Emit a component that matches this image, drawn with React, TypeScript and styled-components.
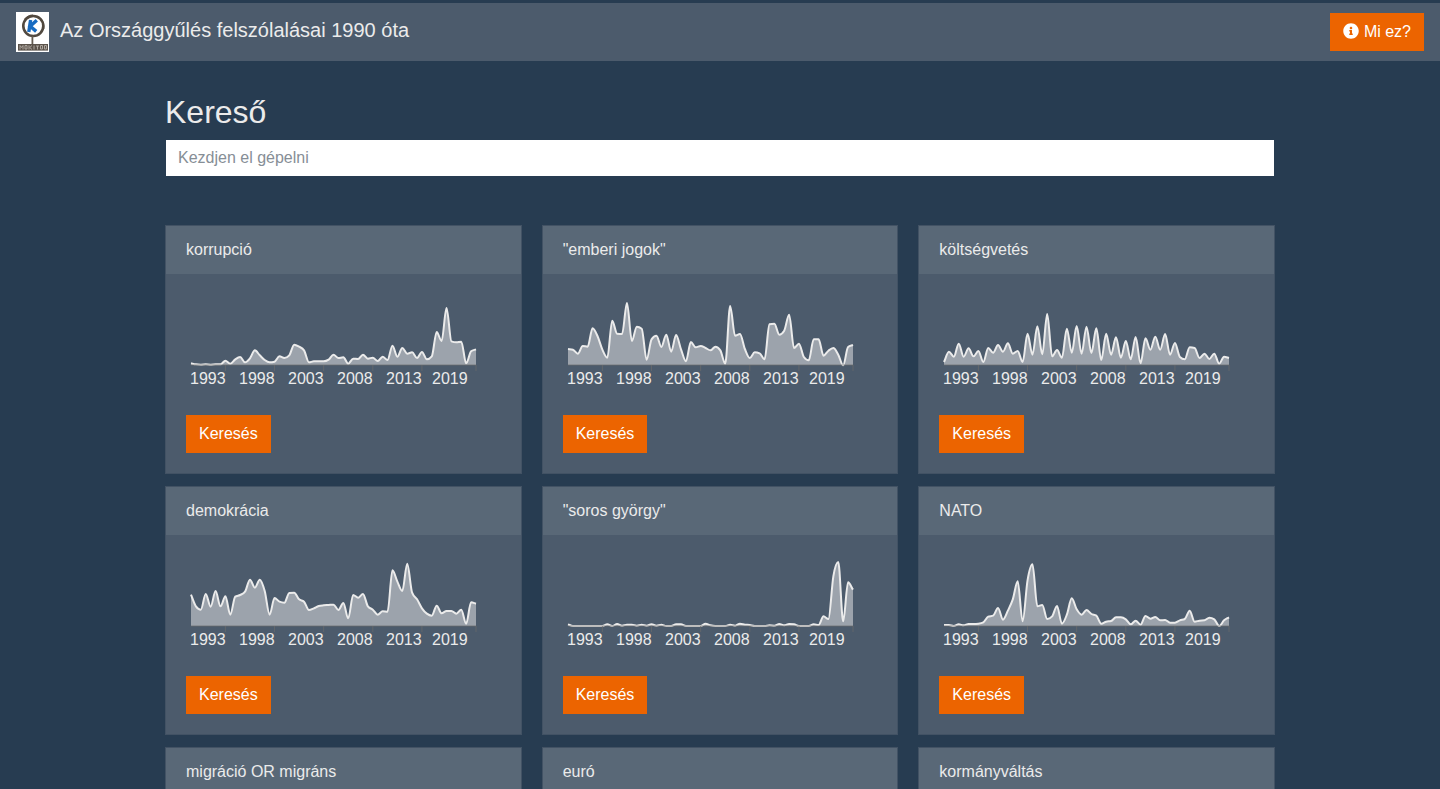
import React from 'react';
import styled, { createGlobalStyle } from 'styled-components';
import { FaInfoCircle } from 'react-icons/fa';

const color = {
  page: '#273c51',
  panel: '#4c5b6c',
  panelHead: '#596877',
  edge: '#425264',
  text: '#ebebeb',
  accent: '#ec6400',
};

const GlobalStyle = createGlobalStyle`
  *, *::before, *::after { box-sizing: border-box; }
  body {
    margin: 0;
    background: ${color.page};
    color: ${color.text};
    font: 16px/24px "Liberation Sans", Arial, sans-serif;
  }
`;

const Page = styled.div`
  height: 100vh;
  overflow-y: auto;
  scrollbar-width: none;
  padding-top: 3px;
`;

const Navbar = styled.nav`
  display: flex;
  align-items: center;
  justify-content: space-between;
  padding: 9px 16px;
  background: ${color.panel};
`;

const Brand = styled.a`
  display: flex;
  align-items: center;
  gap: 11px;
  color: ${color.text};
  font-size: 20px;
  line-height: 30px;
  text-decoration: none;
`;

const BrandName = styled.span`
  padding-bottom: 4px;
`;

const Button = styled.button`
  display: inline-flex;
  align-items: center;
  gap: 5px;
  height: 38px;
  padding: 0 13px;
  border: 0;
  background: ${color.accent};
  color: #fff;
  font: inherit;
  cursor: pointer;
`;

const InfoIcon = styled(FaInfoCircle)`
  margin-bottom: 2px;
`;

const Container = styled.main`
  max-width: 1140px;
  margin: 0 auto;
  padding: 32px 15px 24px;
`;

const Title = styled.h1`
  margin: 0 0 8px;
  font-size: 32px;
  font-weight: 400;
  line-height: 38px;
`;

const SearchInput = styled.input`
  display: block;
  width: 100%;
  height: 38px;
  padding: 0 12px;
  border: 1px solid transparent;
  background: #fff;
  background-clip: padding-box;
  color: #4e5d6c;
  font: inherit;
  &::placeholder { color: #868e96; opacity: 1; }
`;

const CardGrid = styled.section`
  display: grid;
  grid-template-columns: repeat(3, 1fr);
  gap: 12px 20px;
  margin-top: 48px;
`;

const Card = styled.article`
  border: 1px solid ${color.edge};
  background: ${color.panel};
`;

const CardHeader = styled.header`
  padding: 12px 20px;
  background: ${color.panelHead};
`;

const CardBody = styled.div`
  min-height: 199px;
  padding: 20px;
`;

const Chart = styled.svg`
  display: block;
  margin-bottom: 21px;
`;

const YearLabel = styled.text`
  fill: ${color.text};
  font-size: 16px;
`;

const Logo = () => (
  <svg width="33" height="40" viewBox="0 0 33 40" aria-hidden="true">
    <rect width="33" height="40" fill="#fff" />
    <ellipse cx="17.3" cy="14" rx="10" ry="10" fill="none" stroke="#514940" strokeWidth="2.6" />
    <path d="M8.6 7.5Q12 3.4 17 3.2M24.6 7Q28.2 11 27.6 17" fill="none" stroke="#51483d" strokeWidth="1.5" />
    <path d="M16.4 24V32" stroke="#625a50" strokeWidth="1.8" />
    <path d="M14.6 8L12.8 20M20.8 8.2L14.2 14.2L20.2 19.4" fill="none" stroke="#176bc1" strokeWidth="3.4" />
    <rect x="2" y="32" width="30" height="6.6" fill="#5b534b" />
    <path
      d="M4 37.5V33.5L5.5 35.5L7 33.5V37.5M9 33.5H11V37H9ZM13 33.3V37.5M16 33.5L13.7 35.5L16 37.5M18 33.5V37.5M20 34H23M21.5 34V37.5M24.5 33.5H26.5V37H24.5ZM28.5 33.5H30.5V37H28.5Z"
      fill="none"
      stroke="#b5afa8"
      strokeWidth="0.9"
    />
  </svg>
);

/* Plot geometry: three depth units make one pixel. */
const LEFT = 5;
const PLOT_WIDTH = 285;
const AXIS_Y = 71;
const UNIT = 3;
const TICKS = [7, 17, 27, 37, 47, 58];
const YEARS = [
  { label: '1993', x: 4 },
  { label: '1998', x: 53 },
  { label: '2003', x: 102 },
  { label: '2008', x: 151 },
  { label: '2013', x: 200 },
  { label: '2019', x: 246 },
];

type Point = [number, number];

/* Monotone cubic curve, so peaks keep their exact height. */
function curve(p: Point[]): string {
  const n = p.length;
  const slope = p.slice(1).map((q, i) => (q[1] - p[i][1]) / (q[0] - p[i][0]));
  const tangent = p.map((_, i) => {
    if (i === 0) return slope[0];
    if (i === n - 1) return slope[n - 2];
    const a = slope[i - 1];
    const b = slope[i];
    if (a * b <= 0) return 0;
    return Math.sign(a) * Math.min(Math.abs(a), Math.abs(b), Math.abs(a + b) / 4) * 2;
  });
  let d = `M${p[0][0]},${p[0][1]}`;
  for (let i = 1; i < n; i++) {
    const h = (p[i][0] - p[i - 1][0]) / 3;
    d += `C${p[i - 1][0] + h},${p[i - 1][1] + tangent[i - 1] * h} ${p[i][0] - h},${p[i][1] - tangent[i] * h} ${p[i][0]},${p[i][1]}`;
  }
  return d;
}

interface Series {
  base: number;
  depth: number[];
}

function Sparkline({ series, name }: { series: Series; name: string }) {
  const step = PLOT_WIDTH / (series.depth.length - 1);
  const points = series.depth.map((v, i): Point => [LEFT + i * step, AXIS_Y - (series.base - v) / UNIT]);
  const line = curve(points);
  return (
    <Chart width="300" height="100" role="img" aria-label={name}>
      <path d={`${line}V${AXIS_Y}H${LEFT}Z`} fill={color.text} fillOpacity="0.5" />
      <path d={line} fill="none" stroke={color.text} strokeWidth="2" />
      <g stroke="#6b6b6b" strokeOpacity="0.7">
        <path d={`M${LEFT} ${AXIS_Y}H${LEFT + PLOT_WIDTH}`} />
        {TICKS.map((t) => (
          <path key={t} d={`M${LEFT + t * step} ${AXIS_Y}v6`} />
        ))}
      </g>
      {YEARS.map((y) => (
        <YearLabel key={y.label} x={y.x} y="90">{y.label}</YearLabel>
      ))}
    </Chart>
  );
}

const topics: { name: string; series?: Series }[] = [
  {
    name: 'korrupció',
    series: {
      base: 224,
      depth: [219, 222, 223, 222, 223, 222, 222, 211, 220, 207, 200, 216, 204, 180, 195, 209, 216, 214, 198, 203, 195, 163, 169, 180, 216, 213, 213, 213, 208, 193, 203, 201, 220, 205, 206, 193, 205, 202, 212, 199, 209, 166, 199, 173, 190, 186, 203, 185, 207, 198, 125, 152, 53, 153, 156, 154, 219, 183, 177],
    },
  },
  {
    name: '"emberi jogok"',
    series: {
      base: 224,
      depth: [176, 178, 190, 167, 169, 114, 137, 178, 202, 91, 130, 131, 38, 152, 109, 115, 208, 147, 136, 170, 133, 184, 134, 177, 213, 155, 171, 167, 173, 180, 169, 180, 220, 47, 136, 131, 176, 203, 186, 189, 207, 102, 100, 133, 121, 73, 173, 160, 200, 210, 147, 147, 196, 181, 173, 193, 225, 170, 164],
    },
  },
  {
    name: 'költségvetés',
    series: {
      base: 224,
      depth: [215, 184, 199, 160, 199, 174, 198, 182, 215, 173, 187, 164, 184, 159, 190, 182, 215, 130, 193, 108, 192, 71, 198, 179, 202, 115, 187, 107, 190, 109, 188, 114, 209, 130, 193, 141, 202, 152, 207, 140, 219, 144, 178, 139, 178, 131, 193, 158, 200, 207, 171, 173, 203, 190, 206, 190, 220, 199, 203],
    },
  },
  {
    name: 'demokrácia',
    series: {
      base: 227,
      depth: [133, 168, 178, 131, 169, 122, 168, 138, 193, 139, 134, 124, 88, 112, 88, 122, 193, 143, 154, 157, 128, 127, 147, 154, 179, 174, 167, 165, 164, 163, 179, 158, 204, 134, 142, 131, 168, 178, 193, 183, 184, 60, 94, 122, 40, 127, 147, 174, 190, 196, 166, 189, 182, 182, 190, 178, 220, 156, 160],
    },
  },
  {
    name: '"soros györgy"',
    series: {
      base: 227,
      depth: [222, 227, 227, 227, 227, 227, 227, 227, 222, 227, 221, 226, 223, 223, 226, 223, 226, 222, 226, 223, 227, 227, 222, 222, 227, 227, 227, 227, 220, 225, 227, 227, 227, 223, 226, 220, 223, 224, 227, 227, 227, 225, 226, 221, 225, 221, 222, 227, 227, 227, 222, 224, 198, 206, 78, 35, 213, 96, 118],
    },
  },
  {
    name: 'NATO',
    series: {
      base: 227,
      depth: [224, 224, 227, 222, 225, 221, 221, 220, 216, 199, 196, 173, 208, 181, 147, 93, 213, 90, 42, 168, 164, 206, 198, 167, 220, 193, 144, 177, 193, 179, 191, 196, 220, 214, 212, 201, 201, 207, 222, 211, 223, 197, 205, 200, 210, 209, 217, 217, 210, 206, 181, 214, 211, 210, 202, 207, 227, 210, 201],
    },
  },
  { name: 'migráció OR migráns' },
  { name: 'euró' },
  { name: 'kormányváltás' },
];

export default function App() {
  return (
    <Page>
      <GlobalStyle />
      <Navbar>
        <Brand href="#">
          <Logo />
          <BrandName>Az Országgyűlés felszólalásai 1990 óta</BrandName>
        </Brand>
        <Button type="button">
          <InfoIcon aria-hidden="true" />
          Mi ez?
        </Button>
      </Navbar>
      <Container>
        <Title>
          <label htmlFor="search">Kereső</label>
        </Title>
        <SearchInput id="search" type="text" placeholder="Kezdjen el gépelni" />
        <CardGrid>
          {topics.map(({ name, series }) => (
            <Card key={name}>
              <CardHeader>{name}</CardHeader>
              <CardBody>
                {series && (
                  <>
                    <Sparkline series={series} name={name} />
                    <Button type="button">Keresés</Button>
                  </>
                )}
              </CardBody>
            </Card>
          ))}
        </CardGrid>
      </Container>
    </Page>
  );
}
